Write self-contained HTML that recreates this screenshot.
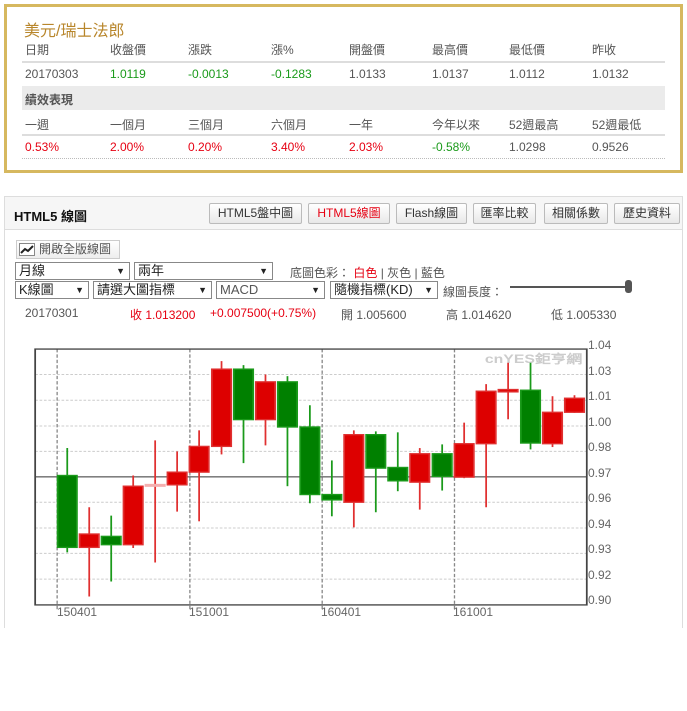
<!DOCTYPE html>
<html><head><meta charset="utf-8"><style>
*{margin:0;padding:0;box-sizing:border-box}
body{width:687px;height:711px;background:#fff;font-family:"Liberation Sans","Noto Sans CJK TC",sans-serif;font-size:12px;color:#555;position:relative;overflow:hidden}
.a{position:absolute;white-space:nowrap}
.r{color:#e60012}.g{color:#1a9a1a}
.sel{position:absolute;height:18px;border:1px solid #888;background:#fff;font-size:13px;color:#222;padding-left:3px;line-height:16px}
.sel:after{content:"▼";position:absolute;right:4px;top:0;font-size:9px;color:#222}
.btn{position:absolute;top:203px;height:21px;border:1px solid #bbb;border-radius:2px;background:linear-gradient(#fff,#e8e8e8);font-size:12px;color:#333;text-align:center;line-height:19px}
</style></head><body>
<div class="a" style="left:4px;top:4px;width:679px;height:169px;border:3px solid #d6b85f"></div>
<div class="a" style="left:24px;top:17px;font-size:16px;color:#b8862b">美元/瑞士法郎</div>
<div class="a" style="left:22px;top:86px;width:643px;height:24px;background:#ebebeb"></div>
<div class="a" style="left:22px;top:61px;width:643px;height:2px;background:#ddd"></div>
<div class="a" style="left:22px;top:134px;width:643px;height:2px;background:#ddd"></div>
<div class="a" style="left:22px;top:158px;width:643px;border-top:1px dotted #bbb"></div>
<div class="a" style="left:25px;top:41px">日期</div><div class="a" style="left:110px;top:41px">收盤價</div><div class="a" style="left:188px;top:41px">漲跌</div><div class="a" style="left:271px;top:41px">漲%</div><div class="a" style="left:349px;top:41px">開盤價</div><div class="a" style="left:432px;top:41px">最高價</div><div class="a" style="left:509px;top:41px">最低價</div><div class="a" style="left:592px;top:41px">昨收</div>
<div class="a" style="left:25px;top:67px">20170303</div><div class="a g" style="left:110px;top:67px">1.0119</div><div class="a g" style="left:188px;top:67px">-0.0013</div><div class="a g" style="left:271px;top:67px">-0.1283</div><div class="a" style="left:349px;top:67px">1.0133</div><div class="a" style="left:432px;top:67px">1.0137</div><div class="a" style="left:509px;top:67px">1.0112</div><div class="a" style="left:592px;top:67px">1.0132</div>
<div class="a" style="left:25px;top:91px;font-weight:bold">績效表現</div>
<div class="a" style="left:25px;top:116px">一週</div><div class="a" style="left:110px;top:116px">一個月</div><div class="a" style="left:188px;top:116px">三個月</div><div class="a" style="left:271px;top:116px">六個月</div><div class="a" style="left:349px;top:116px">一年</div><div class="a" style="left:432px;top:116px">今年以來</div><div class="a" style="left:509px;top:116px">52週最高</div><div class="a" style="left:592px;top:116px">52週最低</div>
<div class="a r" style="left:25px;top:140px">0.53%</div><div class="a r" style="left:110px;top:140px">2.00%</div><div class="a r" style="left:188px;top:140px">0.20%</div><div class="a r" style="left:271px;top:140px">3.40%</div><div class="a r" style="left:349px;top:140px">2.03%</div><div class="a g" style="left:432px;top:140px">-0.58%</div><div class="a" style="left:509px;top:140px">1.0298</div><div class="a" style="left:592px;top:140px">0.9526</div>

<div class="a" style="left:4px;top:196px;width:679px;height:432px;border:1px solid #ddd;border-bottom:none"></div>
<div class="a" style="left:5px;top:197px;width:677px;height:33px;background:#f6f6f6;border-bottom:1px solid #ddd"></div>
<div class="a" style="left:14px;top:206px;font-size:13px;font-weight:bold;color:#111">HTML5 線圖</div>
<div class="btn" style="left:209px;width:93px">HTML5盤中圖</div>
<div class="btn r" style="left:308px;width:82px;color:#e60012">HTML5線圖</div>
<div class="btn" style="left:396px;width:71px">Flash線圖</div>
<div class="btn" style="left:473px;width:63px">匯率比較</div>
<div class="btn" style="left:544px;width:64px">相關係數</div>
<div class="btn" style="left:614px;width:66px">歷史資料</div>

<div class="a" style="left:16px;top:240px;width:104px;height:19px;border:1px solid #ccc;background:linear-gradient(#fff,#eee);font-size:12px;color:#555;line-height:17px;padding-left:22px">開啟全版線圖</div>
<svg class="a" style="left:19px;top:243px" width="16" height="13"><rect x="0.5" y="0.5" width="15" height="12" fill="#fff" stroke="#888"/><polyline points="2,10 6,6 9,8 14,3" fill="none" stroke="#222" stroke-width="2"/></svg>
<div class="sel" style="left:15px;top:262px;width:115px">月線</div>
<div class="sel" style="left:134px;top:262px;width:139px">兩年</div>
<div class="a" style="left:290px;top:264px">底圖色彩： <span class="r">白色</span> | 灰色 | 藍色</div>
<div class="sel" style="left:15px;top:281px;width:74px">K線圖</div>
<div class="sel" style="left:93px;top:281px;width:119px">請選大圖指標</div>
<div class="sel" style="left:216px;top:281px;width:109px;color:#555">MACD</div>
<div class="sel" style="left:330px;top:281px;width:108px">隨機指標(KD)</div>
<div class="a" style="left:443px;top:283px">線圖長度：</div>
<div class="a" style="left:510px;top:286px;width:120px;height:2px;background:#555"></div>
<div class="a" style="left:625px;top:280px;width:7px;height:13px;background:#555;border-radius:3px"></div>
<div class="a" style="left:25px;top:306px">20170301</div>
<div class="a r" style="left:130px;top:306px">收 1.013200</div>
<div class="a r" style="left:210px;top:306px">+0.007500(+0.75%)</div>
<div class="a" style="left:341px;top:306px">開 1.005600</div>
<div class="a" style="left:446px;top:306px">高 1.014620</div>
<div class="a" style="left:551px;top:306px">低 1.005330</div>

<svg class="a" style="left:0;top:330px" width="687" height="300" viewBox="0 0 1563 897" preserveAspectRatio="none">
<g stroke="#ccc" stroke-width="3" stroke-dasharray="6,4">
<line x1="80" x2="1335" y1="133" y2="133"/><line x1="80" x2="1335" y1="210" y2="210"/><line x1="80" x2="1335" y1="287" y2="287"/><line x1="80" x2="1335" y1="363" y2="363"/><line x1="80" x2="1335" y1="515" y2="515"/><line x1="80" x2="1335" y1="592" y2="592"/><line x1="80" x2="1335" y1="668" y2="668"/><line x1="80" x2="1335" y1="745" y2="745"/>
</g>
<g stroke="#888" stroke-width="3" stroke-dasharray="10,6">
<line x1="130" x2="130" y1="57" y2="840"/><line x1="432" x2="432" y1="57" y2="840"/><line x1="733" x2="733" y1="57" y2="840"/><line x1="1034" x2="1034" y1="57" y2="840"/>
</g>
<line x1="80" x2="1335" y1="439" y2="439" stroke="#333" stroke-width="3"/>
<rect x="80" y="57" width="1255" height="765" fill="none" stroke="#444" stroke-width="4"/>
<text x="1325" y="98" text-anchor="end" font-size="36" fill="#ccc" font-weight="bold" font-family="Liberation Sans">cnYES鉅亨網</text>
<g stroke-width="4">
<g stroke="#1a9a1a" fill="#008000">
<line x1="153" x2="153" y1="353" y2="665"/><rect x="131" y="435" width="44" height="215"/>
<line x1="253" x2="253" y1="555" y2="752"/><rect x="231" y="617" width="44" height="25"/>
<line x1="554" x2="554" y1="105" y2="398"/><rect x="532" y="117" width="44" height="151"/>
<line x1="654" x2="654" y1="138" y2="467"/><rect x="632" y="155" width="44" height="135"/>
<line x1="705" x2="705" y1="225" y2="518"/><rect x="683" y="290" width="44" height="202"/>
<line x1="755" x2="755" y1="390" y2="557"/><rect x="733" y="492" width="44" height="16"/>
<line x1="855" x2="855" y1="303" y2="545"/><rect x="833" y="313" width="44" height="100"/>
<line x1="905" x2="905" y1="306" y2="482"/><rect x="883" y="411" width="44" height="40"/>
<line x1="1006" x2="1006" y1="342" y2="480"/><rect x="984" y="370" width="44" height="68"/>
<line x1="1207" x2="1207" y1="98" y2="357"/><rect x="1185" y="180" width="44" height="158"/>
</g>
<g stroke="#e03030" fill="#dd0000">
<line x1="203" x2="203" y1="530" y2="797"/><rect x="181" y="610" width="44" height="40"/>
<line x1="303" x2="303" y1="435" y2="652"/><rect x="281" y="467" width="44" height="175"/>
<line x1="353" x2="353" y1="330" y2="695"/><rect x="331" y="462" width="44" height="5" fill="#f4b0b0" stroke="#f4b0b0"/>
<line x1="403" x2="403" y1="363" y2="543"/><rect x="381" y="425" width="44" height="38"/>
<line x1="453" x2="453" y1="300" y2="572"/><rect x="431" y="348" width="44" height="77"/>
<line x1="504" x2="504" y1="93" y2="372"/><rect x="482" y="117" width="44" height="231"/>
<line x1="604" x2="604" y1="133" y2="345"/><rect x="582" y="155" width="44" height="113"/>
<line x1="805" x2="805" y1="300" y2="590"/><rect x="783" y="313" width="44" height="202"/>
<line x1="955" x2="955" y1="353" y2="537"/><rect x="933" y="370" width="44" height="85"/>
<line x1="1056" x2="1056" y1="277" y2="443"/><rect x="1034" y="340" width="44" height="100"/>
<line x1="1106" x2="1106" y1="162" y2="530"/><rect x="1084" y="183" width="44" height="157"/>
<line x1="1156" x2="1156" y1="98" y2="267"/><rect x="1134" y="178" width="44" height="7"/>
<line x1="1257" x2="1257" y1="198" y2="350"/><rect x="1235" y="246" width="44" height="94"/>
<line x1="1307" x2="1307" y1="195" y2="248"/><rect x="1285" y="204" width="44" height="42"/>
</g></g>
</svg>
<div class="a" style="left:588px;top:333px;line-height:25.5px;color:#666">1.04<br>1.03<br>1.01<br>1.00<br>0.98<br>0.97<br>0.96<br>0.94<br>0.93<br>0.92<br>0.90</div>
<div class="a" style="left:57px;top:605px;color:#666">150401</div>
<div class="a" style="left:189px;top:605px;color:#666">151001</div>
<div class="a" style="left:321px;top:605px;color:#666">160401</div>
<div class="a" style="left:453px;top:605px;color:#666">161001</div>
</body></html>
